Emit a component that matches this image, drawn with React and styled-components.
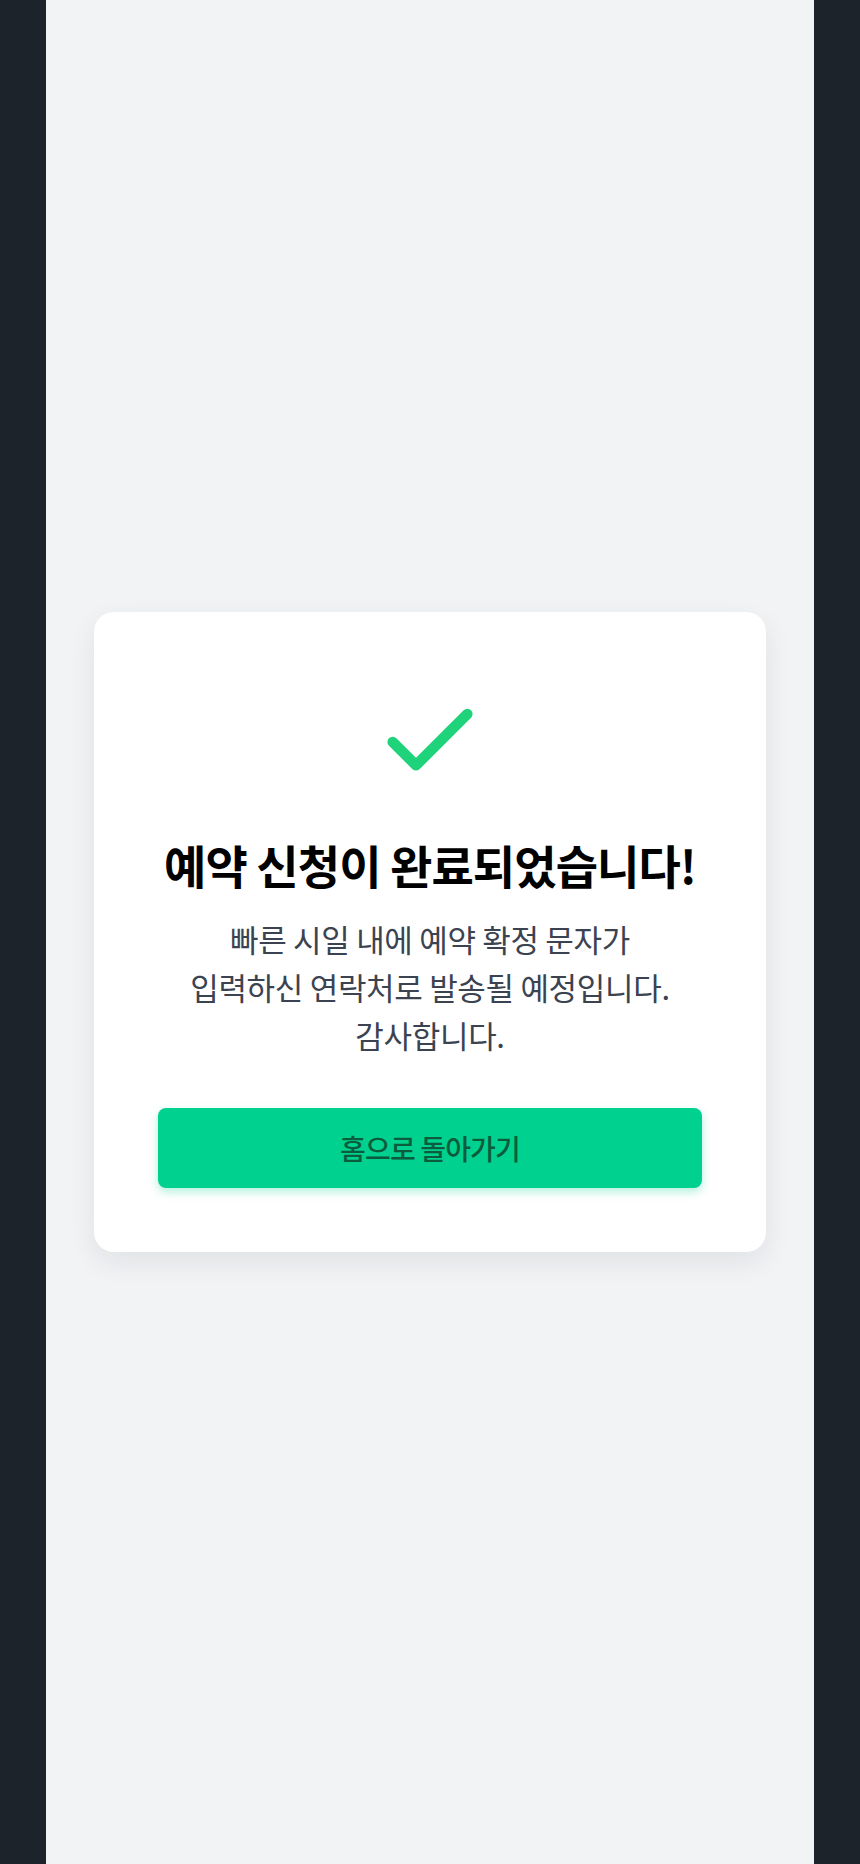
import React from 'react';
import styled, { createGlobalStyle } from 'styled-components';
import { Check } from 'lucide-react';

const GlobalStyle = createGlobalStyle`
  * {
    box-sizing: border-box;
  }
  body {
    margin: 0;
    background-color: #1d232a;
    font-family: 'Noto Sans CJK KR', 'Noto Sans', sans-serif;
  }
`;

const Page = styled.div`
  max-width: 768px;
  min-height: 100vh;
  margin: 0 auto;
  padding: 0 48px;
  background-color: #f2f3f5;
  display: flex;
  align-items: center;
  justify-content: center;
`;

const Card = styled.div`
  width: 100%;
  background-color: #ffffff;
  border-radius: 20px;
  box-shadow: 0 10px 28px rgba(17, 24, 39, 0.08);
  padding: 64px;
  display: flex;
  flex-direction: column;
  align-items: center;
  text-align: center;
`;

const IconWrap = styled.div`
  display: flex;
  justify-content: center;
  margin-top: 10px;
  color: #1fd37a;
`;

const Title = styled.h1`
  margin: 36px 0 0;
  font-size: 46px;
  font-weight: 700;
  letter-spacing: -0.02em;
  line-height: 60px;
  color: #000000;
`;

const Message = styled.p`
  margin: 21px 0 0;
  font-size: 31px;
  font-weight: 400;
  line-height: 48px;
  letter-spacing: -0.01em;
  color: #3b4350;
`;

const HomeButton = styled.button`
  width: 100%;
  height: 80px;
  margin-top: 49px;
  border: none;
  border-radius: 8px;
  background-color: #00d18f;
  box-shadow: 0 4px 10px rgba(0, 209, 143, 0.3);
  color: #0b5c3c;
  font-family: inherit;
  font-size: 28px;
  font-weight: 500;
  letter-spacing: -0.03em;
  cursor: pointer;
`;

export default function App() {
  return (
    <>
      <GlobalStyle />
      <Page>
        <Card>
          <IconWrap>
            <Check size={112} strokeWidth={2.25} />
          </IconWrap>
          <Title>예약 신청이 완료되었습니다!</Title>
          <Message>
            빠른 시일 내에 예약 확정 문자가
            <br />
            입력하신 연락처로 발송될 예정입니다.
            <br />
            감사합니다.
          </Message>
          <HomeButton type="button">홈으로 돌아가기</HomeButton>
        </Card>
      </Page>
    </>
  );
}
